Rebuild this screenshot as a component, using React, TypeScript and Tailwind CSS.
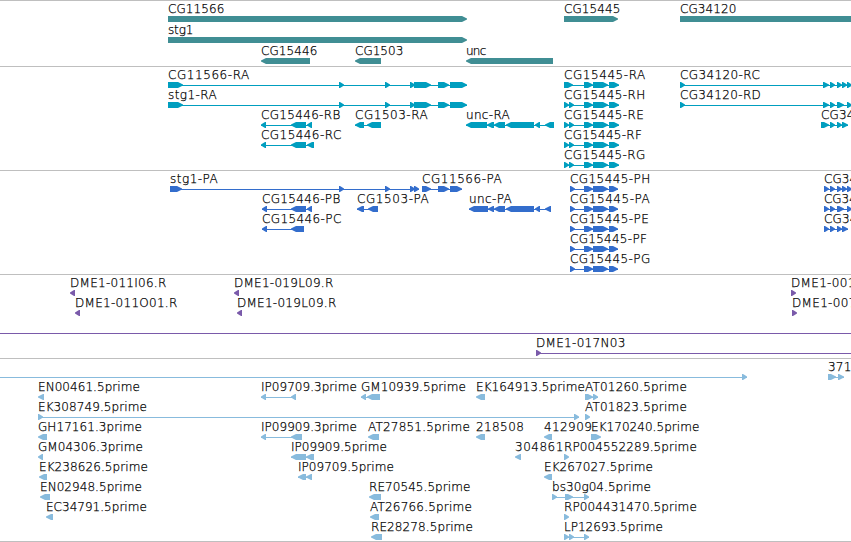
import React from 'react';

type Span = [number, number];

interface Feature {
  label?: string;
  labelWidth?: number;
  lane: number;
  dir: 1 | -1;
  spans: Span[];
  line?: Span;
}

interface TrackProps {
  color: string;
  heightClass: string;
  laneHeight?: number;
  features: Feature[];
}

const WIDTH = 851;
const BAR = 6;
const HEAD = 5;
const SIDE_BEARING = 0.7;

const geneFeatures: Feature[] = [
  { label: 'CG11566', labelWidth: 57, lane: 0, dir: 1, spans: [[168, 467]] },
  { label: 'CG15445', labelWidth: 57, lane: 0, dir: 1, spans: [[564, 618]] },
  { label: 'CG34120', labelWidth: 57, lane: 0, dir: 1, spans: [[680, 870]] },
  { label: 'stg1', labelWidth: 26, lane: 1, dir: 1, spans: [[168, 467]] },
  { label: 'CG15446', labelWidth: 57, lane: 2, dir: -1, spans: [[261, 310]] },
  { label: 'CG1503', labelWidth: 49, lane: 2, dir: -1, spans: [[355, 381]] },
  { label: 'unc', labelWidth: 21, lane: 2, dir: -1, spans: [[466, 553]] },
];

const stgExons: Span[] = [[168, 183], [339, 344], [385, 390], [410, 415], [414, 431], [438, 449], [450, 467]];
const cg15445Exons: Span[] = [[564, 569], [569, 574], [584, 593], [593, 608], [609, 619]];

const transcriptFeatures: Feature[] = [
  { label: 'CG11566-RA', labelWidth: 82, lane: 0, dir: 1, spans: stgExons },
  { label: 'stg1-RA', labelWidth: 49.5, lane: 1, dir: 1, spans: stgExons },
  { label: 'CG15446-RB', labelWidth: 80, lane: 2, dir: -1, spans: [[261, 266], [291, 306], [307, 312]] },
  { label: 'CG15446-RC', labelWidth: 81, lane: 3, dir: -1, spans: [[261, 266], [291, 306], [307, 314]] },
  { label: 'CG1503-RA', labelWidth: 73.5, lane: 2, dir: -1, spans: [[355, 364], [367, 381]] },
  { label: 'unc-RA', labelWidth: 44.5, lane: 2, dir: -1, spans: [[466, 487], [487, 494], [494, 505], [506, 534], [535, 540], [545, 554]] },
  { label: 'CG15445-RA', labelWidth: 82, lane: 0, dir: 1, spans: [[564, 573], [584, 593], [593, 608], [609, 619]] },
  { label: 'CG15445-RH', labelWidth: 82, lane: 1, dir: 1, spans: cg15445Exons },
  { label: 'CG15445-RE', labelWidth: 80.5, lane: 2, dir: 1, spans: cg15445Exons },
  { label: 'CG15445-RF', labelWidth: 78.5, lane: 3, dir: 1, spans: cg15445Exons },
  { label: 'CG15445-RG', labelWidth: 82, lane: 4, dir: 1, spans: cg15445Exons },
  { label: 'CG34120-RC', labelWidth: 80.5, lane: 0, dir: 1, spans: [[680, 685], [823, 829], [830, 835], [837, 842], [842, 847], [847, 852]] },
  { label: 'CG34120-RD', labelWidth: 81.5, lane: 1, dir: 1, spans: [[680, 685], [823, 829], [830, 835], [837, 844], [847, 852]] },
  { label: 'CG34120-RB', labelWidth: 78, lane: 2, dir: 1, spans: [[821, 829], [830, 835], [837, 842], [842, 848]] },
];

const cg15445Cds: Span[] = [[570, 575], [584, 593], [593, 608], [609, 618]];

const proteinFeatures: Feature[] = [
  { label: 'stg1-PA', labelWidth: 48.5, lane: 0, dir: 1, spans: [[170, 182], [339, 344], [385, 390], [410, 415], [414, 419]] },
  { label: 'CG11566-PA', labelWidth: 80.5, lane: 0, dir: 1, spans: [[422, 431], [438, 449], [450, 462]] },
  { label: 'CG15446-PB', labelWidth: 79, lane: 1, dir: -1, spans: [[262, 267], [291, 306], [307, 312]] },
  { label: 'CG15446-PC', labelWidth: 80, lane: 2, dir: -1, spans: [[262, 267], [291, 304]] },
  { label: 'CG1503-PA', labelWidth: 72.5, lane: 1, dir: -1, spans: [[357, 364], [368, 378]] },
  { label: 'unc-PA', labelWidth: 43.5, lane: 1, dir: -1, spans: [[469, 488], [488, 494], [494, 505], [506, 534], [535, 540], [545, 551]] },
  { label: 'CG15445-PH', labelWidth: 81, lane: 0, dir: 1, spans: cg15445Cds },
  { label: 'CG15445-PA', labelWidth: 80.5, lane: 1, dir: 1, spans: cg15445Cds },
  { label: 'CG15445-PE', labelWidth: 79.5, lane: 2, dir: 1, spans: cg15445Cds },
  { label: 'CG15445-PF', labelWidth: 77.5, lane: 3, dir: 1, spans: cg15445Cds },
  { label: 'CG15445-PG', labelWidth: 81, lane: 4, dir: 1, spans: cg15445Cds },
  { label: 'CG34120-PC', labelWidth: 77, lane: 0, dir: 1, spans: [[824, 829], [830, 835], [837, 842], [842, 847], [847, 852]] },
  { label: 'CG34120-PD', labelWidth: 77, lane: 1, dir: 1, spans: [[824, 829], [830, 835], [837, 844], [847, 852]] },
  { label: 'CG34120-PB', labelWidth: 77, lane: 2, dir: 1, spans: [[824, 829], [830, 835], [837, 842], [842, 848]] },
];

const bacFeatures: Feature[] = [
  { label: 'DME1-011I06.R', labelWidth: 97, lane: 0, dir: -1, spans: [[70, 75]] },
  { label: 'DME1-011O01.R', labelWidth: 103, lane: 1, dir: -1, spans: [[75, 80]] },
  { label: 'DME1-019L09.R', labelWidth: 100, lane: 0, dir: -1, spans: [[234, 239]] },
  { label: 'DME1-019L09.R', labelWidth: 100, lane: 1, dir: -1, spans: [[237, 242]] },
  { label: 'DME1-001', labelWidth: 65, lane: 0, dir: 1, spans: [[791, 796]] },
  { label: 'DME1-007', labelWidth: 65, lane: 1, dir: 1, spans: [[792, 797]] },
  { lane: 2, dir: 1, spans: [], line: [0, WIDTH] },
  { label: 'DME1-017N03', labelWidth: 90, lane: 3, dir: 1, spans: [[536, 541]], line: [536, WIDTH] },
];

const estFeatures: Feature[] = [
  { lane: 0, dir: 1, spans: [[742, 747]], line: [0, 747] },
  { label: '371', labelWidth: 24, lane: 0, dir: 1, spans: [[828, 836], [838, 844]] },
  { label: 'EN00461.5prime', labelWidth: 102.5, lane: 1, dir: -1, spans: [[38, 44]] },
  { label: 'IP09709.3prime', labelWidth: 96.5, lane: 1, dir: -1, spans: [[261, 266], [291, 296]] },
  { label: 'GM10939.5prime', labelWidth: 105.5, lane: 1, dir: -1, spans: [[361, 366], [367, 380]] },
  { label: 'EK164913.5prime', labelWidth: 109.5, lane: 1, dir: -1, spans: [[476, 485]] },
  { label: 'AT01260.5prime', labelWidth: 102.5, lane: 1, dir: 1, spans: [[585, 593], [593, 598]] },
  { label: 'EK308749.5prime', labelWidth: 109.5, lane: 2, dir: 1, spans: [[38, 43], [574, 579]] },
  { label: 'AT01823.5prime', labelWidth: 102.5, lane: 2, dir: 1, spans: [[585, 590]] },
  { label: 'GH17161.3prime', labelWidth: 104.5, lane: 3, dir: -1, spans: [[38, 47]] },
  { label: 'IP09909.3prime', labelWidth: 96.5, lane: 3, dir: -1, spans: [[261, 266], [291, 302]] },
  { label: 'AT27851.5prime', labelWidth: 102.5, lane: 3, dir: -1, spans: [[368, 379]] },
  { label: '218508', labelWidth: 48.5, lane: 3, dir: -1, spans: [[476, 485]] },
  { label: '412909', labelWidth: 48.5, lane: 3, dir: -1, spans: [[544, 552]] },
  { label: 'EK170240.5prime', labelWidth: 109, lane: 3, dir: 1, spans: [[591, 601]] },
  { label: 'GM04306.3prime', labelWidth: 105.5, lane: 4, dir: -1, spans: [[38, 43]] },
  { label: 'IP09909.5prime', labelWidth: 96.5, lane: 4, dir: -1, spans: [[291, 306], [306, 314]] },
  { label: '304861', labelWidth: 49, lane: 4, dir: -1, spans: [[515, 521]] },
  { label: 'RP004552289.5prime', labelWidth: 133.5, lane: 4, dir: 1, spans: [[564, 569]] },
  { label: 'EK238626.5prime', labelWidth: 109.5, lane: 5, dir: -1, spans: [[39, 47]] },
  { label: 'IP09709.5prime', labelWidth: 96.5, lane: 5, dir: -1, spans: [[298, 306], [306, 312]] },
  { label: 'EK267027.5prime', labelWidth: 109.5, lane: 5, dir: -1, spans: [[544, 552]] },
  { label: 'EN02948.5prime', labelWidth: 102.5, lane: 6, dir: -1, spans: [[40, 50]] },
  { label: 'RE70545.5prime', labelWidth: 102, lane: 6, dir: -1, spans: [[369, 381]] },
  { label: 'bs30g04.5prime', labelWidth: 99.5, lane: 6, dir: 1, spans: [[552, 557], [565, 573], [584, 589]] },
  { label: 'EC34791.5prime', labelWidth: 101.5, lane: 7, dir: -1, spans: [[46, 53]] },
  { label: 'AT26766.5prime', labelWidth: 102.5, lane: 7, dir: -1, spans: [[370, 379]] },
  { label: 'RP004431470.5prime', labelWidth: 133.5, lane: 7, dir: 1, spans: [[564, 569]] },
  { label: 'RE28278.5prime', labelWidth: 102.5, lane: 8, dir: -1, spans: [[371, 382]] },
  { label: 'LP12693.5prime', labelWidth: 99.5, lane: 8, dir: 1, spans: [[564, 569], [569, 574], [584, 589]] },
];

// block with a pointed end on the strand side
const arrowPoints = ([x1, x2]: Span, y: number, dir: 1 | -1) => {
  const tip = dir === 1 ? x2 : x1;
  const back = dir === 1 ? x1 : x2;
  const neck = tip - dir * Math.min(HEAD, x2 - x1 - 1);
  return `${back},${y} ${neck},${y} ${tip},${y + 2.5} ${tip},${y + 3.5} ${neck},${y + BAR} ${back},${y + BAR}`;
};

const FeatureGlyph: React.FC<{ feature: Feature; y: number; color: string }> = ({ feature, y, color }) => {
  const { spans, dir, label, labelWidth } = feature;
  const line = feature.line ?? [spans[0][0], spans[spans.length - 1][1]];

  return (
    <g>
      {(feature.line || spans.length > 1) && (
        <rect x={line[0]} y={y + 3} width={line[1] - line[0]} height={1} fill={color} shapeRendering="crispEdges" />
      )}
      {spans.map((span, i) => (
        <polygon key={i} points={arrowPoints(span, y, dir)} fill={color} />
      ))}
      {label && (
        <text
          x={spans[0][0]}
          y={y - 3}
          textLength={labelWidth ? labelWidth - SIDE_BEARING : undefined}
          className="fill-black stroke-black stroke-[0.25px] font-['DejaVu_Sans',sans-serif] text-[12px] font-extralight"
        >
          {label}
        </text>
      )}
    </g>
  );
};

const Track: React.FC<TrackProps> = ({ color, heightClass, laneHeight = 20, features }) => (
  <section className={`${heightClass} w-full shrink-0 border-t border-[#bfbfbf]`}>
    <svg className="block h-full w-full overflow-hidden">
      {features.map((feature, i) => (
        <FeatureGlyph key={i} feature={feature} y={15 + feature.lane * laneHeight} color={color} />
      ))}
    </svg>
  </section>
);

const App: React.FC = () => {
  return (
    <main className="flex h-[542px] w-[851px] flex-col overflow-hidden border-b border-[#bfbfbf] bg-white">
      <Track color="#408e94" heightClass="h-[66px]" laneHeight={21} features={geneFeatures} />
      <Track color="#009ebf" heightClass="h-[104px]" features={transcriptFeatures} />
      <Track color="#336dcc" heightClass="h-[104px]" features={proteinFeatures} />
      <Track color="#7a5aaa" heightClass="h-[84px]" features={bacFeatures} />
      <Track color="#88bbdd" heightClass="h-[183px]" features={estFeatures} />
    </main>
  );
};

export default App;
